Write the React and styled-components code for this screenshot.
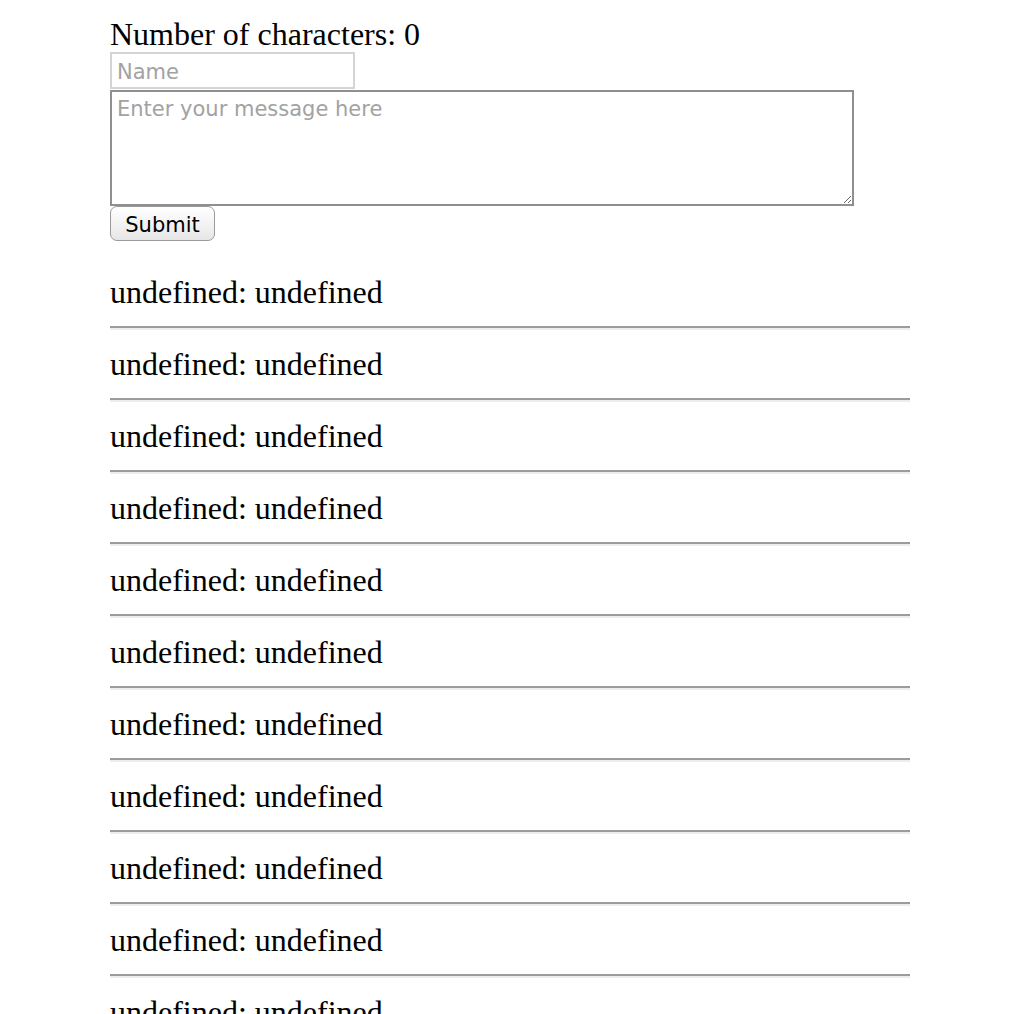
import React, { useState } from "react";
import styled, { createGlobalStyle } from "styled-components";

const GlobalStyle = createGlobalStyle`
  html, body {
    margin: 0;
    padding: 0;
    background: #ffffff;
  }
  body {
    font-family: "Liberation Serif", "Times New Roman", serif;
    color: #000000;
  }
`;

const Page = styled.main`
  width: 800px;
  margin-left: 110px;
  padding-top: 16px;
`;

const Counter = styled.div`
  font-size: 32px;
  line-height: 36px;
`;

const Form = styled.form`
  display: flex;
  flex-direction: column;
  align-items: flex-start;
`;

const NameInput = styled.input`
  box-sizing: border-box;
  width: 245px;
  height: 37px;
  margin: 0;
  padding: 2px 5px 0;
  border: 2px solid #d4d4d4;
  font-family: "DejaVu Sans", "Lucida Grande", sans-serif;
  font-size: 21px;
  outline: none;

  &::placeholder {
    color: #a2a2a2;
  }
`;

const MessageInput = styled.textarea`
  box-sizing: border-box;
  width: 744px;
  height: 116px;
  margin: 1px 0 0;
  padding: 5px 5px;
  border: 2px solid #8f8f8f;
  font-family: "DejaVu Sans", "Lucida Grande", sans-serif;
  font-size: 21px;
  outline: none;

  &::placeholder {
    color: #a2a2a2;
  }
`;

const SubmitButton = styled.button`
  box-sizing: border-box;
  width: 105px;
  height: 35px;
  margin: 0;
  padding: 2px 0 0;
  border: 1.5px solid #9a9a9a;
  border-radius: 7px;
  background: linear-gradient(#ffffff, #f2f2f2 55%, #e6e6e6);
  font-family: "DejaVu Sans", "Lucida Grande", sans-serif;
  font-size: 21px;
  color: #000000;
`;

const MessageList = styled.div`
  margin-top: 33px;
`;

const MessageText = styled.div`
  font-size: 32px;
  line-height: 36px;
`;

const Rule = styled.hr`
  margin: 16px 0;
  height: 0;
  border: none;
  border-top: 2px solid #9b9b9b;
  border-bottom: 2px solid #ededed;
`;

const messages = Array.from({ length: 12 }, () => ({}));

export default function App() {
  const [text, setText] = useState("");

  return (
    <>
      <GlobalStyle />
      <Page>
        <Counter>Number of characters: {text.length}</Counter>
        <Form onSubmit={(e) => e.preventDefault()}>
          <NameInput placeholder="Name" />
          <MessageInput
            placeholder="Enter your message here"
            value={text}
            onChange={(e) => setText(e.target.value)}
          />
          <SubmitButton type="submit">Submit</SubmitButton>
        </Form>
        <MessageList>
          {messages.map((m, i) => (
            <div key={i}>
              <MessageText>
                {String(m.name)}: {String(m.message)}
              </MessageText>
              <Rule />
            </div>
          ))}
        </MessageList>
      </Page>
    </>
  );
}
